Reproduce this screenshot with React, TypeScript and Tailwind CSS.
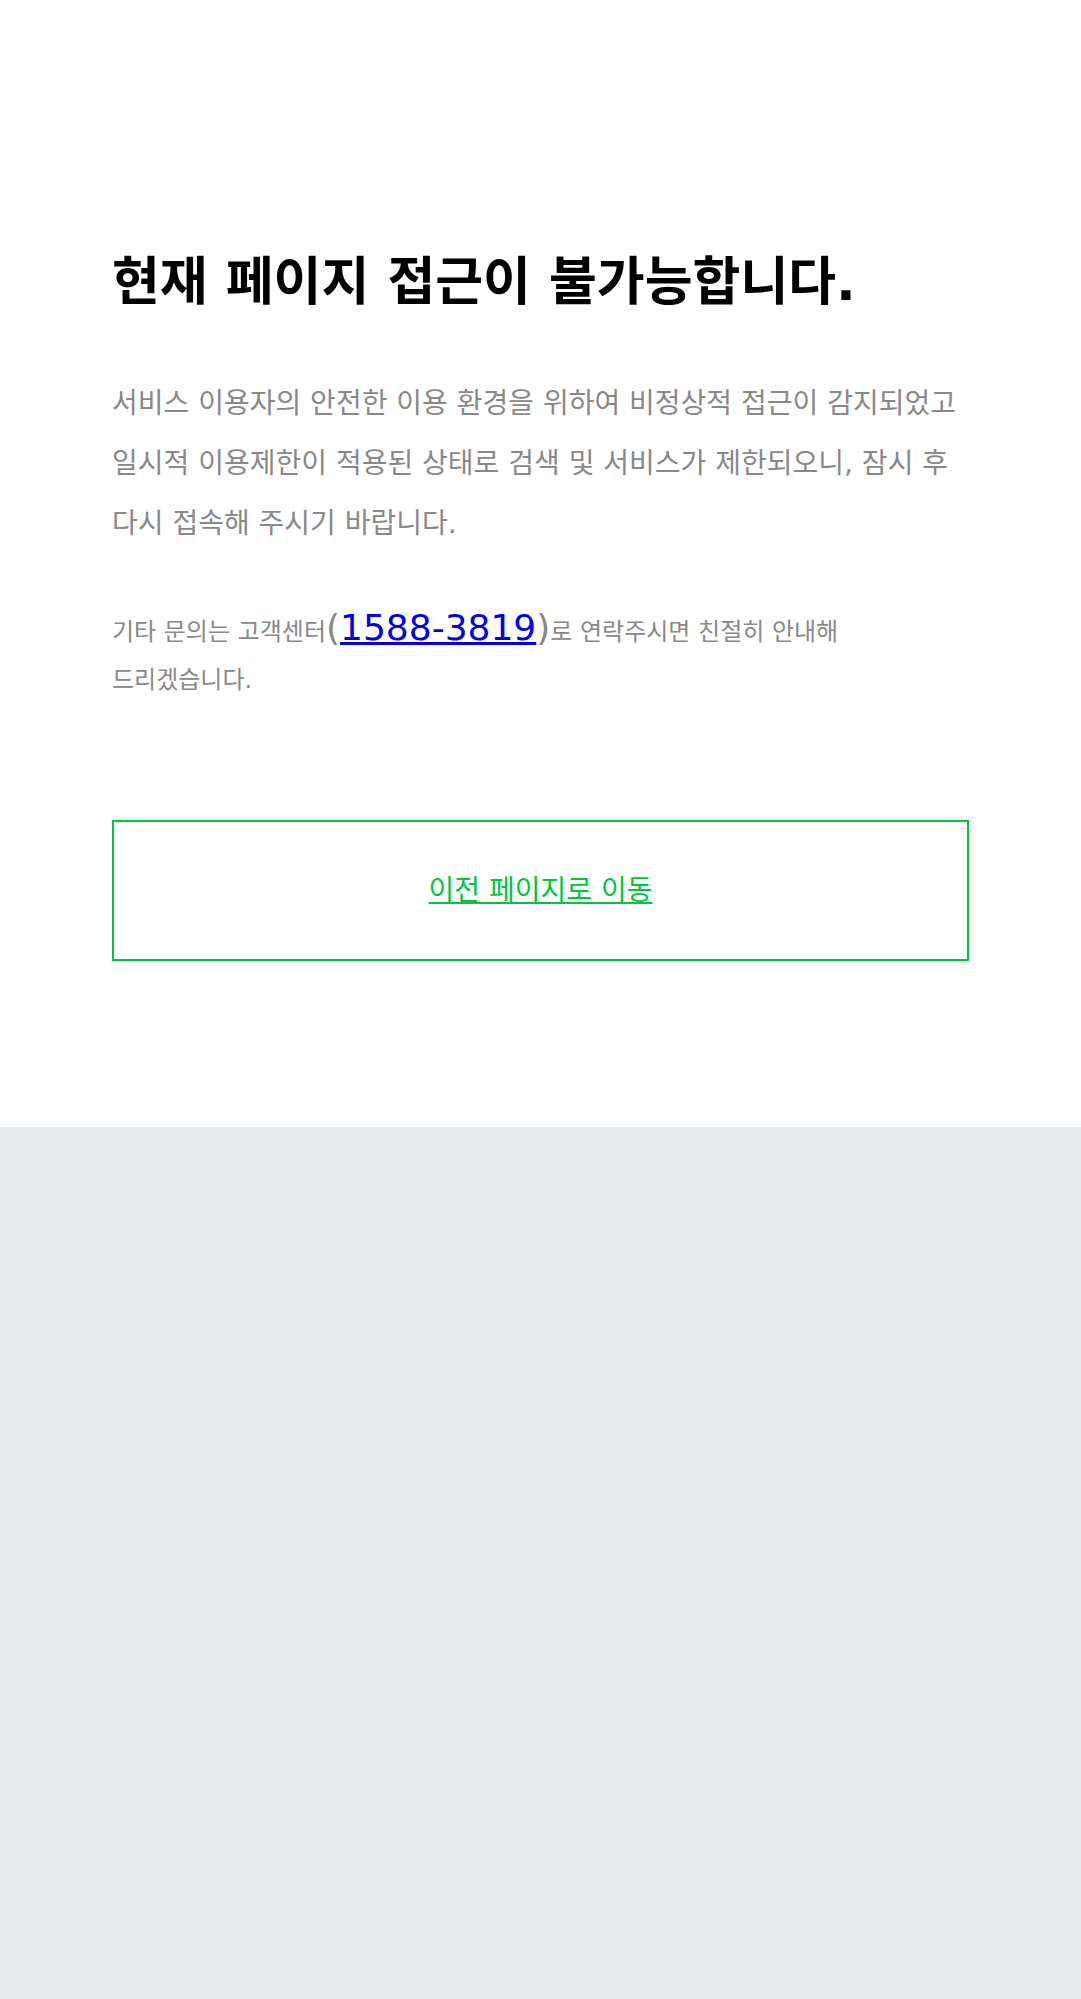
export default function App() {
  return (
    <div
      className="min-h-screen bg-[#e8ebee]"
      style={{ fontFamily: '"DejaVu Sans", "Noto Sans CJK KR", sans-serif' }}
    >
      {/* 안내 영역 */}
      <div className="bg-white px-[112px] pt-[242px] pb-[166px] break-keep">
        <h1 className="text-[52px] leading-[80px] font-bold text-black">
          현재 페이지 접근이 불가능합니다.
        </h1>

        <p className="mt-[52px] text-[28px] leading-[60px] text-[#888888]">
          서비스 이용자의 안전한 이용 환경을 위하여 비정상적 접근이 감지되었고
          일시적 이용제한이 적용된 상태로 검색 및 서비스가 제한되오니, 잠시 후
          다시 접속해 주시기 바랍니다.
        </p>

        <p className="mt-[54px] text-[24px] leading-[48px] text-[#888888]">
          <span>기타 문의는 고객센터</span>
          <span className="text-[36px] leading-none">(</span>
          <a href="#" className="text-[36px] leading-none text-[#0000ee] underline">
            1588-3819
          </a>
          <span className="text-[36px] leading-none">)</span>
          <span>로 연락주시면 친절히 안내해</span>{" "}
          <span>드리겠습니다.</span>
        </p>

        <a
          href="#"
          className="mt-[116px] flex h-[141px] items-center justify-center border-2 border-[#00c73c] bg-white"
        >
          <span className="text-[28px] text-[#00c73c] underline">
            이전 페이지로 이동
          </span>
        </a>
      </div>
    </div>
  );
}
